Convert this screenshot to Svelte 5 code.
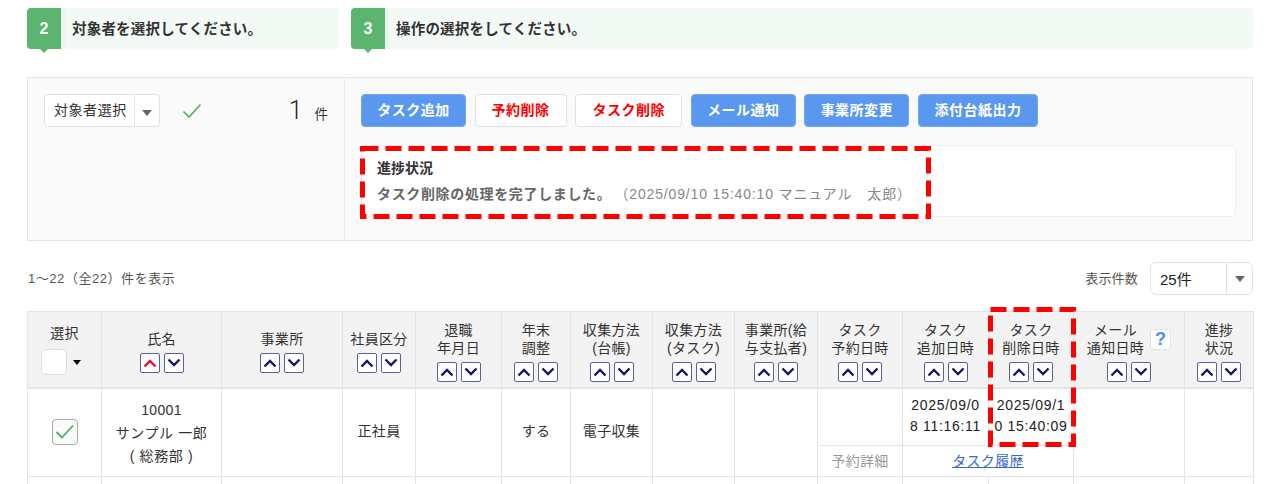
<script>
  const cols = [
    { w: 74 }, { w: 120 }, { w: 121 }, { w: 73 }, { w: 86 }, { w: 69 }, { w: 82 },
    { w: 82 }, { w: 83 }, { w: 85 }, { w: 86 }, { w: 85 }, { w: 111 }, { w: 69 }
  ];
  const heads = [
    { l: ['氏名'], red: true },
    { l: ['事業所'] },
    { l: ['社員区分'] },
    { l: ['退職', '年月日'] },
    { l: ['年末', '調整'] },
    { l: ['収集方法', '(台帳)'] },
    { l: ['収集方法', '(タスク)'] },
    { l: ['事業所(給', '与支払者)'] },
    { l: ['タスク', '予約日時'] },
    { l: ['タスク', '追加日時'] },
    { l: ['タスク', '削除日時'] }
  ];
  const buttons = [
    { t: 'タスク追加', w: 105, k: 'blue' },
    { t: '予約削除', w: 92, k: 'white' },
    { t: 'タスク削除', w: 107, k: 'white' },
    { t: 'メール通知', w: 105, k: 'blue' },
    { t: '事業所変更', w: 105, k: 'blue' },
    { t: '添付台紙出力', w: 120, k: 'blue' }
  ];
</script>

{#snippet sort(red)}
  <div class="sort">
    <span class="sb" class:red>
      <svg width="14" height="10" viewBox="0 0 14 10"><path d="M1.5 8.5 L7 3 L12.5 8.5" fill="none" stroke="currentColor" stroke-width="2.4" /></svg>
    </span>
    <span class="sb">
      <svg width="14" height="10" viewBox="0 0 14 10"><path d="M1.5 1.5 L7 7 L12.5 1.5" fill="none" stroke="currentColor" stroke-width="2.4" /></svg>
    </span>
  </div>
{/snippet}

{#snippet caret(c)}
  <svg class="caret" width="10" height="6" viewBox="0 0 10 6"><path d="M0 0 H10 L5 6 Z" fill={c} /></svg>
{/snippet}

<main>
  <div class="steps">
    <div class="step s2"><div class="num">2</div><div class="st">対象者を選択してください。</div></div>
    <div class="step s3"><div class="num">3</div><div class="st">操作の選択をしてください。</div></div>
  </div>

  <section class="panel">
    <div class="left">
      <div class="select sel1">
        <span class="v">対象者選択</span>
        <span class="arrow">{@render caret('#666')}</span>
      </div>
      <svg class="tick" width="20" height="16" viewBox="0 0 20 16"><path d="M1.5 8.5 L7 14 L18.5 1.5" fill="none" stroke="#4cb05f" stroke-width="1.6" /></svg>
      <div class="count"><b>1</b><span>件</span></div>
    </div>
    <div class="right">
      <div class="btns">
        {#each buttons as b}
          <div class="btn {b.k}" style="width:{b.w}px">{b.t}</div>
        {/each}
      </div>
      <div class="progress">
        <div class="pt">進捗状況</div>
        <div class="pm"><b>タスク削除の処理を完了しました。</b><span class="pd">（2025/09/10 15:40:10 マニュアル　太郎）</span></div>
        <svg class="dash d1" width="571" height="73"><rect x="2.5" y="2.5" width="566" height="68" fill="none" stroke="#f00" stroke-width="5" stroke-dasharray="16 7" /></svg>
      </div>
    </div>
  </section>

  <div class="meta">
    <div class="range">1～22（全22）件を表示</div>
    <div class="per">
      <span>表示件数</span>
      <div class="select sel2">
        <span class="v">25件</span>
        <span class="arrow">{@render caret('#666')}</span>
      </div>
    </div>
  </div>

  <div class="tw">
    <table>
      <colgroup>
        {#each cols as c}<col style="width:{c.w}px" />{/each}
      </colgroup>
      <thead>
        <tr>
          <th class="selh">
            <div>選択</div>
            <div class="allsel"><span class="box"></span>{@render caret('#000')}</div>
          </th>
          {#each heads as h}
            <th>
              {#each h.l as line}<div>{line}</div>{/each}
              {@render sort(h.red)}
            </th>
          {/each}
          <th class="mailh">
            <div class="mh">
              <div><div>メール</div><div>通知日時</div></div>
              <span class="q">?</span>
            </div>
            {@render sort(false)}
          </th>
          <th><div>進捗</div><div>状況</div>{@render sort(false)}</th>
        </tr>
      </thead>
      <tbody>
        <tr class="r1">
          <td rowspan="2">
            <span class="cb"><svg width="20" height="16" viewBox="0 0 20 16"><path d="M1.5 8 L7 13.5 L18 1.5" fill="none" stroke="#4cb05f" stroke-width="1.8" /></svg></span>
          </td>
          <td rowspan="2" class="name"><div class="id">10001</div><div>サンプル 一郎</div><div>( 総務部 )</div></td>
          <td rowspan="2"></td>
          <td rowspan="2" class="t">正社員</td>
          <td rowspan="2"></td>
          <td rowspan="2" class="t">する</td>
          <td rowspan="2" class="t">電子収集</td>
          <td rowspan="2"></td>
          <td rowspan="2"></td>
          <td></td>
          <td class="date">2025/09/0<br />8 11:16:11</td>
          <td class="date">2025/09/1<br />0 15:40:09</td>
          <td rowspan="2"></td>
          <td rowspan="2"></td>
        </tr>
        <tr class="r2">
          <td class="gray">予約詳細</td>
          <td colspan="2"><span class="link">タスク履歴</span></td>
        </tr>
        <tr class="r3">
          {#each cols as c}<td></td>{/each}
        </tr>
      </tbody>
    </table>
    <svg class="dash d2" width="88" height="140"><rect x="2.5" y="2.5" width="83" height="135" fill="none" stroke="#f00" stroke-width="5" stroke-dasharray="16 7" /></svg>
  </div>
</main>

<style>
  :global(body) {
    margin: 0;
    background: #fff;
  }
  main {
    box-sizing: border-box;
    height: 484px;
    overflow: hidden;
    padding: 8px 27px 0;
    font-family: "Liberation Sans", "Noto Sans CJK JP", sans-serif;
    font-size: 14px;
    color: #333;
  }
  .steps {
    display: flex;
    gap: 12px;
  }
  .step {
    height: 41px;
    display: flex;
    align-items: center;
    background: #f3f9f4;
    border-radius: 4px;
  }
  .s2 { width: 312px; }
  .s3 { flex: 1; }
  .num {
    position: relative;
    width: 34px;
    height: 41px;
    display: flex;
    align-items: center;
    justify-content: center;
    background: #5cb56e;
    color: #fff;
    font-weight: 700;
    font-size: 16px;
    border-radius: 4px 0 0 4px;
    box-shadow: 3px 0 4px rgba(0, 0, 0, 0.04);
  }
  .num::after {
    content: "";
    position: absolute;
    left: 13px;
    top: 41px;
    border: 4px solid transparent;
    border-top-color: #5cb56e;
    border-bottom: 0;
  }
  .st {
    margin-left: 11px;
    padding-bottom: 3px;
    font-weight: 700;
    font-size: 14.5px;
    letter-spacing: 0.2px;
  }
  .panel {
    margin-top: 28px;
    height: 164px;
    box-sizing: border-box;
    display: flex;
    background: #fafafa;
    border: 1px solid #e4e4e4;
  }
  .left {
    width: 317px;
    box-sizing: border-box;
    border-right: 1px solid #eee;
    padding: 16px 16px 0;
    display: flex;
    align-items: flex-start;
  }
  .select {
    display: flex;
    box-sizing: border-box;
    background: #fff;
    border: 1px solid #e2e2e2;
    border-radius: 4px;
    color: #333;
  }
  .select .v {
    flex: 1;
    display: flex;
    align-items: center;
  }
  .arrow {
    display: flex;
    align-items: center;
    justify-content: center;
    border-left: 1px solid #e2e2e2;
  }
  .sel1 {
    width: 116px;
    height: 33px;
  }
  .sel1 .v {
    padding-left: 9px;
    padding-bottom: 3px;
    font-size: 14px;
    letter-spacing: 0.55px;
    box-sizing: border-box;
  }
  .sel1 .arrow { width: 25px; padding-top: 4px; box-sizing: border-box; }
  .tick { margin: 9px 0 0 22px; flex: none; }
  .count {
    margin-left: auto;
    display: flex;
    align-items: baseline;
    height: 33px;
  }
  .count b {
    font-weight: 300;
    font-size: 25px;
    line-height: 33px;
    color: #222;
    font-family: "Roboto", sans-serif;
  }
  .count span {
    margin-left: 12px;
    font-size: 13.5px;
  }
  .right {
    flex: 1;
    padding: 16px 16px 0 16px;
    min-width: 0;
  }
  .btns {
    display: flex;
    gap: 8.6px;
  }
  .btn {
    box-sizing: border-box;
    height: 33px;
    padding-bottom: 3px;
    display: flex;
    align-items: center;
    justify-content: center;
    border-radius: 4px;
    font-weight: 700;
    font-size: 14px;
    letter-spacing: 0.5px;
  }
  .blue {
    background: #5a98ef;
    color: #fff;
    border: 1px solid #74a8f0;
  }
  .white {
    background: #fff;
    color: #f00;
    border: 1px solid #e2e2e2;
  }
  .progress {
    position: relative;
    box-sizing: border-box;
    margin-top: 18px;
    height: 72px;
    background: #fff;
    border: 1px solid #eee;
    border-radius: 4px;
    padding: 12px 15px 0;
  }
  .pt {
    font-weight: 700;
    font-size: 14px;
    line-height: 20px;
    color: #333;
  }
  .pm {
    margin-top: 6px;
    line-height: 20px;
    white-space: nowrap;
    color: #666;
  }
  .pm b { font-size: 14px; font-weight: 700; letter-spacing: 0.65px; }
  .pd { margin-left: 10px; font-size: 14px; color: #888; letter-spacing: 0.85px; }
  .dash {
    position: absolute;
    z-index: 2;
    pointer-events: none;
  }
  .d1 { left: -2px; top: 0; }
  .meta {
    display: flex;
    justify-content: space-between;
    align-items: center;
    margin-top: 21px;
    height: 33px;
    font-size: 13px;
    color: #555;
  }
  .range { margin-left: 1px; margin-bottom: 3px; letter-spacing: 0.55px; }
  .per {
    display: flex;
    align-items: center;
    gap: 12px;
    letter-spacing: 0.2px;
  }
  .per > span { margin-bottom: 2px; }
  .sel2 {
    width: 103px;
    height: 33px;
    border-radius: 6px;
  }
  .sel2 .v {
    padding-left: 9px;
    font-size: 15px;
    color: #222;
    letter-spacing: 0;
  }
  .sel2 .arrow { width: 25px; }
  .tw {
    position: relative;
    margin-top: 16px;
  }
  .d2 { left: 961px; top: -4px; }
  table {
    table-layout: fixed;
    border-collapse: collapse;
    width: 1226px;
    text-align: center;
    letter-spacing: 0.35px;
    line-height: 18px;
  }
  th, td {
    border: 1px solid #e4e4e4;
    padding: 0;
    overflow: hidden;
  }
  th {
    height: 76px;
    background: #f3f3f3;
    font-weight: 400;
    vertical-align: middle;
    padding-top: 5px;
    box-sizing: border-box;
    border-bottom: 2px solid #e4e4e4;
  }
  .selh { vertical-align: top; padding-top: 12px; }
  .allsel {
    margin-top: 7px;
    padding-right: 8px;
    display: flex;
    align-items: center;
    justify-content: center;
    gap: 6px;
  }
  .allsel .caret { width: 8px; height: 5px; }
  .box {
    width: 26px;
    height: 26px;
    box-sizing: border-box;
    background: #fff;
    border: 1px solid #ddd;
    border-radius: 5px;
  }
  .sort {
    display: flex;
    justify-content: center;
    gap: 4px;
    margin-top: 5px;
  }
  .sb {
    width: 20px;
    height: 20px;
    box-sizing: border-box;
    display: flex;
    align-items: center;
    justify-content: center;
    background: #fff;
    border: 1px solid #5d5da8;
    border-radius: 2px;
    color: #14146e;
  }
  .sb.red { color: #e0122e; }
  .mh {
    display: flex;
    justify-content: center;
    align-items: center;
    gap: 6px;
  }
  .q {
    width: 21px;
    height: 21px;
    box-sizing: border-box;
    display: flex;
    align-items: center;
    justify-content: center;
    background: #fff;
    border: 1px solid #e2e2e2;
    border-radius: 3px;
    color: #4a90e8;
    font-weight: 700;
    font-size: 18px;
  }
  .r1 td { height: 54px; }
  .r2 td { height: 30px; }
  .r3 td { height: 20px; }
  .t { padding-bottom: 2px; }
  .name { line-height: 23px; padding-top: 3px; }
  .name div { letter-spacing: 0.6px; }
  .name .id { letter-spacing: 0.35px; }
  .date {
    line-height: 20.5px;
    letter-spacing: 0.7px;
    white-space: nowrap;
    color: #222;
    padding-bottom: 2px;
  }
  .cb {
    display: inline-flex;
    align-items: center;
    justify-content: center;
    width: 26px;
    height: 26px;
    box-sizing: border-box;
    border: 1px solid #aaa;
    border-radius: 4px;
    background: #fafafa;
    vertical-align: middle;
  }
  .gray { color: #999; font-size: 14px; }
  .link { color: #3a68c8; text-decoration: underline; }
</style>
